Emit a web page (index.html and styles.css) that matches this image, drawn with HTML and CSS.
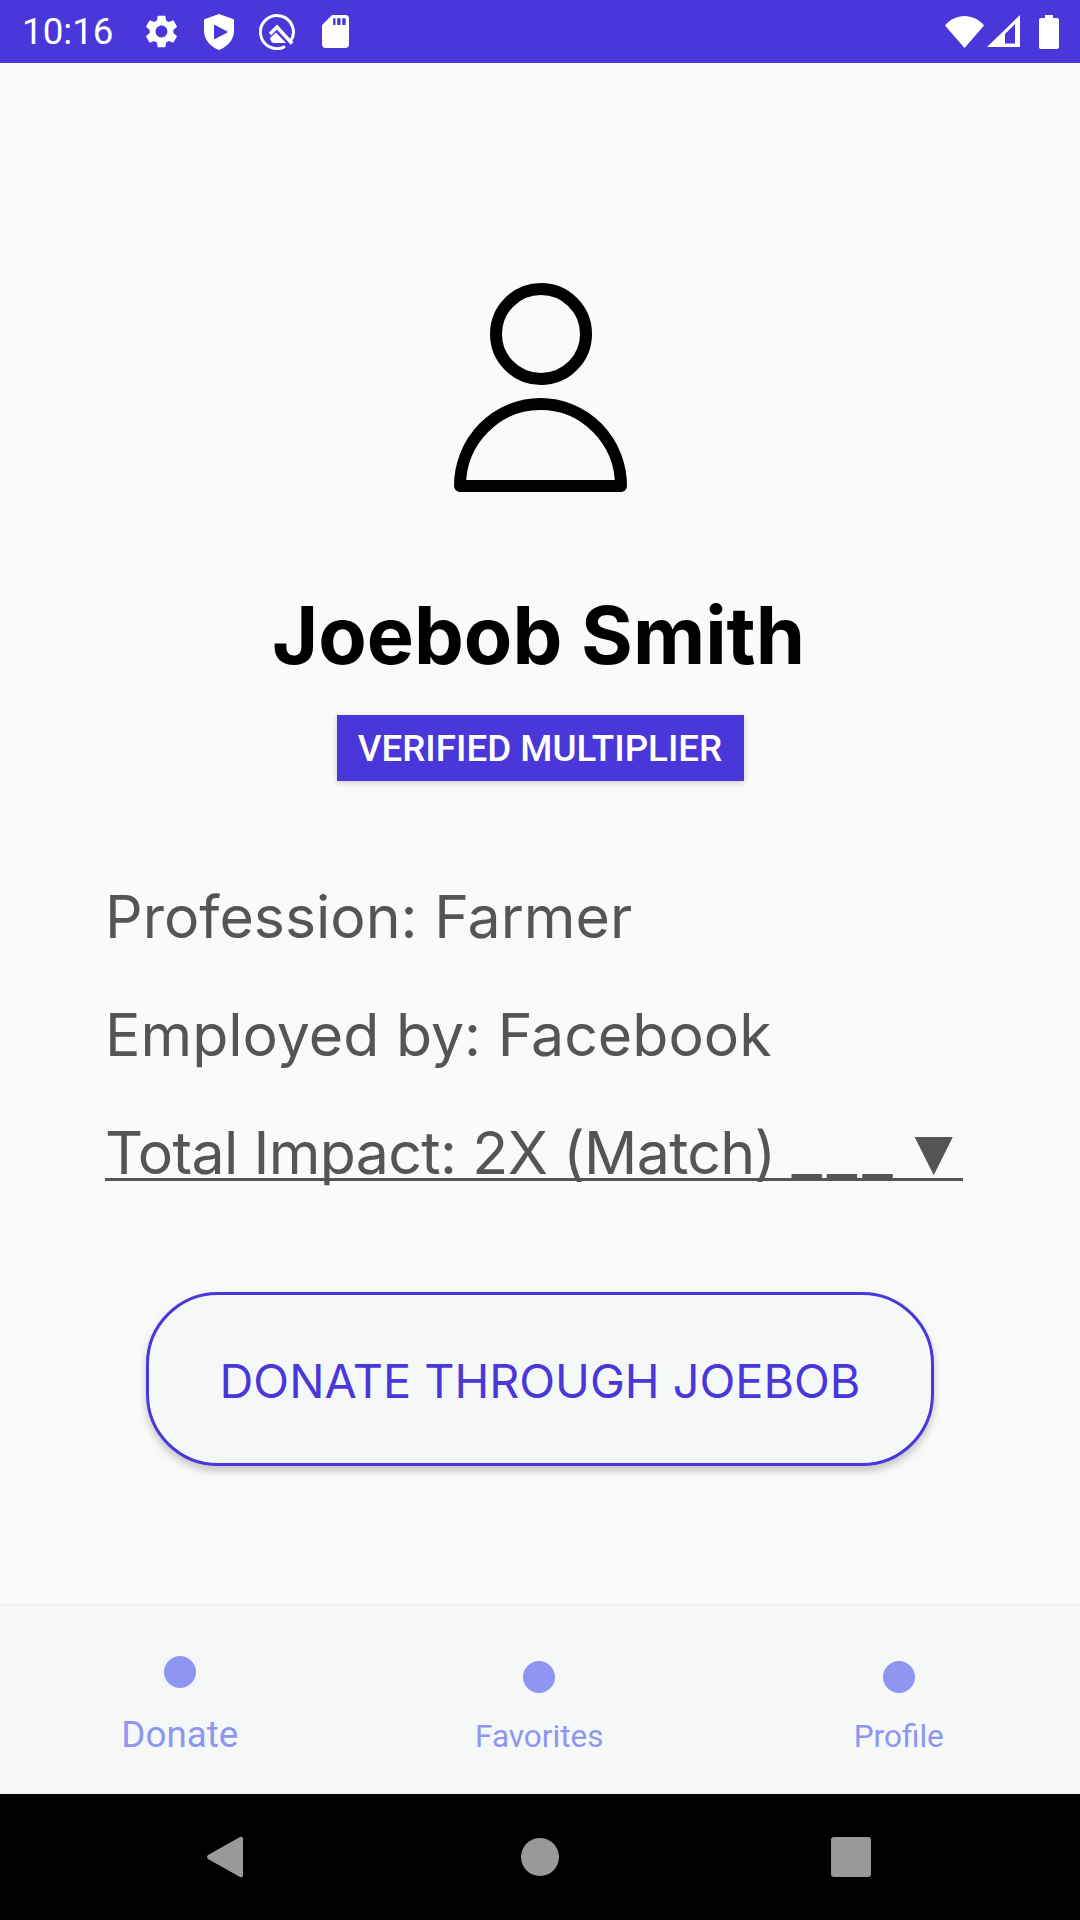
FILE: index.html
```html
<!DOCTYPE html>
<html lang="en">
<head>
<meta charset="utf-8">
<title>Joebob Smith</title>
<link rel="stylesheet" href="styles.css">
</head>
<body>
<div class="app">
  <header class="status">
    <span class="time">10:16</span>
    <svg class="ic gear" viewBox="2.4 2 19.2 20" fill="#fff"><path d="M19.14 12.94c.04-.3.06-.61.06-.94 0-.32-.02-.64-.07-.94l2.03-1.58c.18-.14.23-.41.12-.61l-1.92-3.32c-.12-.22-.37-.29-.59-.22l-2.39.96c-.5-.38-1.03-.7-1.62-.94l-.36-2.54c-.04-.24-.24-.41-.48-.41h-3.84c-.24 0-.43.17-.47.41l-.36 2.54c-.59.24-1.13.57-1.62.94l-2.39-.96c-.22-.08-.47 0-.59.22L2.74 8.87c-.12.21-.08.47.12.61l2.03 1.58c-.05.3-.09.63-.09.94s.02.64.07.94l-2.03 1.58c-.18.14-.23.41-.12.61l1.92 3.32c.12.22.37.29.59.22l2.39-.96c.5.38 1.03.7 1.62.94l.36 2.54c.05.24.24.41.48.41h3.84c.24 0 .44-.17.47-.41l.36-2.54c.59-.24 1.13-.56 1.62-.94l2.39.96c.22.08.47 0 .59-.22l1.92-3.32c.12-.22.07-.47-.12-.61l-2.01-1.58zM12 15.6c-1.98 0-3.6-1.62-3.6-3.6s1.62-3.6 3.6-3.6 3.6 1.62 3.6 3.6-1.62 3.6-3.6 3.6z"/></svg>
    <svg class="ic shield" viewBox="0 0 30 36" fill="#fff"><path fill-rule="evenodd" d="M15 0 L29 5 Q30 5.400 30 6.500 V17 C30 26 23 33 15 36 C7 33 0 26 0 17 V6.500 Q0 5.400 1 5 Z M10 11.500 V24.500 Q10 25.500 11 25 L23 18.800 Q24 18 23 17.200 L11 11 Q10 10.500 10 11.500 Z"/></svg>
    <svg class="ic qlogo" viewBox="0 0 37 37" fill="none" stroke="#fff"><path stroke-width="3" d="M26 33.500 A16.500 16.500 0 1 1 31.500 28.500"/><path stroke-width="3.500" d="M11 21 L18 14 L33 30.500"/><path fill="#fff" stroke="none" d="M11 25 L17 19.500 L27 30 H15 Q12 30 11 25 Z"/></svg>
    <svg class="ic sd" viewBox="4 2 16 20" fill="#fff" preserveAspectRatio="none"><path d="M18 2h-8L4.020 8 4 20c0 1.100.9 2 2 2h12c1.100 0 2-.9 2-2V4c0-1.100-.9-2-2-2zm-6 6h-1.400V4H12v4zm3 0h-2V4h2v4zm3 0h-2V4h2v4z" fill-rule="evenodd"/></svg>
    <span class="spacer"></span>
    <svg class="ic wifi" viewBox="0 0 39 32" fill="#fff"><path d="M0 9.500 C5 3.500 12 0 19.500 0 S34 3.500 39 9.500 L19.500 32 Z"/></svg>
    <svg class="ic signal" viewBox="0 0 33 33" fill="#fff"><path fill-rule="evenodd" d="M33 0 V32 H0 Z M28 9 L18 19 V28.500 H28 Z"/></svg>
    <svg class="ic battery" viewBox="0 0 20 34" fill="#fff"><path d="M6 0 H14 V3 H18 Q20 3 20 5 V32 Q20 34 18 34 H2 Q0 34 0 32 V5 Q0 3 2 3 H6 Z"/></svg>
  </header>

  <main class="profile">
    <svg class="avatar" viewBox="0 0 173 209" fill="none" stroke="#000" stroke-width="12" stroke-linejoin="round"><circle cx="87" cy="51" r="45"/><path d="M6 203 A80.500 82 0 0 1 167 203 Z"/></svg>
    <h1 class="name">Joebob Smith</h1>
    <div class="badge">VERIFIED MULTIPLIER</div>
    <ul class="facts">
      <li class="fact">Profession: Farmer</li>
      <li class="fact">Employed by: Facebook</li>
      <li class="fact select"><span class="select-text">Total Impact: 2X (Match) <span class="blank">___</span></span><span class="caret">▼</span></li>
    </ul>
    <button class="donate">DONATE THROUGH JOEBOB</button>
  </main>

  <nav class="tabs">
    <div class="tab active"><span class="dot"></span><span class="tab-label">Donate</span></div>
    <div class="tab"><span class="dot"></span><span class="tab-label">Favorites</span></div>
    <div class="tab"><span class="dot"></span><span class="tab-label">Profile</span></div>
  </nav>

  <footer class="sysnav">
    <svg class="back" viewBox="0 0 36 42" fill="#999"><path d="M1 19 L33 1 Q36 0 36 3 V39 Q36 42 33 41 L1 23 Q-1 21 1 19 Z"/></svg>
    <span class="home"></span>
    <span class="recent"></span>
  </footer>
</div>
</body>
</html>
```

FILE: styles.css
```css
* { box-sizing: border-box; }
html, body { margin: 0; padding: 0; }
body { width: 1080px; height: 1920px; overflow: hidden; font-family: "Roboto", "Liberation Sans", sans-serif; background: #fafafa; }
.app { display: flex; flex-direction: column; width: 1080px; height: 1920px; }

.status { display: flex; align-items: center; height: 63px; flex: none; background: #4a37da; padding: 0 21px 0 22px; color: #fff; }
.time { font-size: 36.75px; width: 123px; }
.ic { display: block; flex: none; }
.gear { width: 33px; height: 33px; margin-right: 26px; }
.shield { width: 30px; height: 36px; margin-right: 25px; }
.qlogo { width: 37px; height: 37px; margin-right: 26px; }
.sd { width: 27px; height: 33px; }
.spacer { flex: 1; }
.wifi { width: 39px; height: 32px; margin-right: 3px; }
.signal { width: 33px; height: 33px; margin-right: 19px; }
.battery { width: 20px; height: 34px; }

.profile { flex: 1; display: flex; flex-direction: column; align-items: center; padding-top: 220px; }
.avatar { width: 173px; height: 209px; flex: none; }
.name { margin: 99px 3px 0 0; font-family: "Inter", sans-serif; font-weight: 700; font-size: 79.2px; line-height: 88px; color: #000; }
.badge { margin-top: 36px; width: 407px; height: 66px; display: flex; align-items: center; justify-content: center; background: #4a37da; color: #fff; font-weight: 500; font-size: 36.75px; box-shadow: 0 2px 6px rgba(0,0,0,.18); }
.facts { list-style: none; margin: 108px 0 0 105px; padding: 0; width: 858px; align-self: flex-start; display: flex; flex-direction: column; gap: 63px; }
.fact { font-family: "Inter", sans-serif; font-weight: 400; font-size: 59px; line-height: 55px; color: #555; }
.select { display: flex; justify-content: space-between; border-bottom: 3px solid #555; height: 56px; }
.select-text { white-space: nowrap; letter-spacing: -0.65px; }
.blank { font-size: 68px; font-weight: 300; line-height: 0; letter-spacing: 5px; }
.caret { font-family: "DejaVu Sans", sans-serif; font-size: 50px; margin-right: 10px; }
.donate { margin-top: 111px; width: 788px; height: 174px; padding-top: 4px; border: 3px solid #4a37da; border-radius: 72px; background: #f6f8f8; color: #4a37da; font-family: "Inter", sans-serif; font-size: 46.8px; box-shadow: 0 5px 8px rgba(0,0,0,.22); }

.tabs { display: flex; height: 190px; flex: none; background: #f6f8f8; border-top: 1px solid #eee; padding: 0 1.5px 0 0; }
.tab { flex: 1; display: flex; flex-direction: column; align-items: center; padding-top: 56px; gap: 25px; color: #8e96f2; font-size: 31.5px; }
.tab.active { padding-top: 51px; gap: 25px; font-size: 36.75px; }
.dot { width: 32px; height: 32px; border-radius: 50%; background: #8e96f2; }

.sysnav { height: 126px; flex: none; background: #000; display: flex; align-items: center; }
.back { width: 36px; height: 42px; margin-left: 207px; }
.home { width: 38px; height: 38px; border-radius: 50%; background: #999; margin-left: 278px; }
.recent { width: 40px; height: 40px; border-radius: 3px; background: #999; margin-left: 272px; }
```
